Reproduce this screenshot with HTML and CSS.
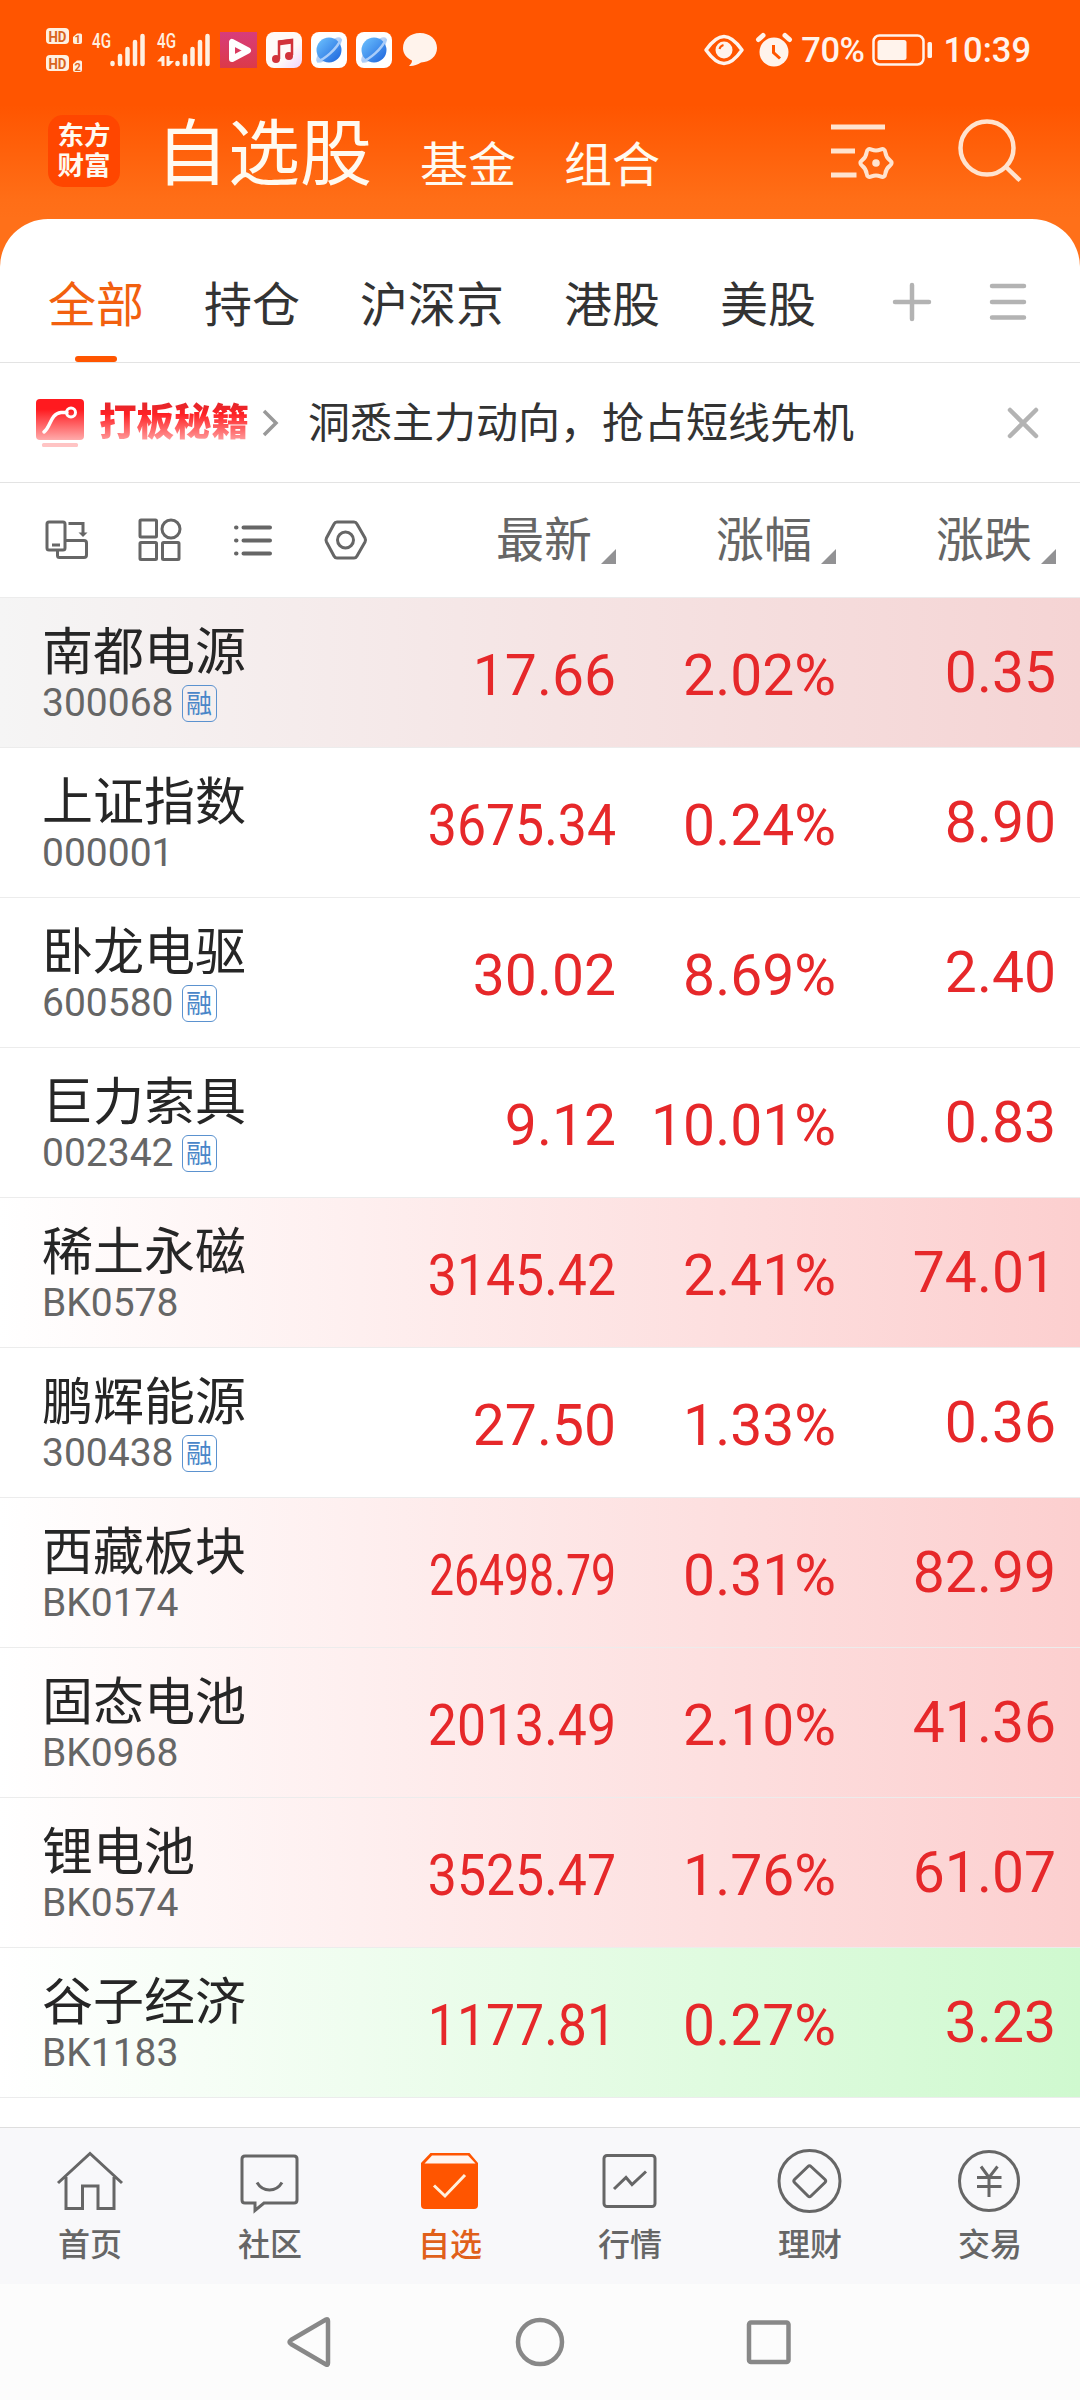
FILE: index.html
```html
<!DOCTYPE html>
<html lang="zh-CN">
<head>
  <meta charset="UTF-8">
  <meta name="viewport" content="width=device-width, initial-scale=1.0">
  <title>自选股</title>
  <link rel="stylesheet" href="styles.css">
</head>
<body>
  <!-- shared icons -->
  <svg class="defs" width="0" height="0">
    <defs>
      <linearGradient id="planet" x1="0" y1="0" x2="1" y2="1">
        <stop offset="0" stop-color="#6fc4ff"/>
        <stop offset="1" stop-color="#1b62dc"/>
      </linearGradient>
      <linearGradient id="play" x1="0" y1="0" x2="0" y2="1">
        <stop offset="0" stop-color="#d83c7c"/>
        <stop offset="1" stop-color="#dc3a48"/>
      </linearGradient>
      <linearGradient id="music" x1="0" y1="0" x2="1" y2="1">
        <stop offset="0.6" stop-color="#fffaf8"/>
        <stop offset="1" stop-color="#f0d4fa"/>
      </linearGradient>
      <linearGradient id="board" x1="0" y1="0" x2="0" y2="1">
        <stop offset="0.25" stop-color="#ff1a1f"/>
        <stop offset="1" stop-color="#ffabab"/>
      </linearGradient>
      <symbol id="browser" viewBox="0 0 36 36">
        <rect width="36" height="36" rx="8" fill="#fff"/>
        <ellipse cx="18" cy="18" rx="17" ry="6" transform="rotate(-45 18 18)" fill="#b9d2f6"/>
        <circle cx="18" cy="18" r="12.5" fill="url(#planet)"/>
        <path d="M6 29.500C13 28 26 17 30 7" fill="none" stroke="#a9cdfa" stroke-width="2.500"/>
      </symbol>
    </defs>
  </svg>

  <div class="top">
    <div class="status">
      <svg class="hd" width="36" height="44" viewBox="0 0 36 44">
        <rect x="0" y="0" width="23" height="16" rx="4"/>
        <path d="M27 9l4-3.500h3.500q1.500 0 1.500 1.500v7q0 2-2 2h-5q-2 0-2-2z"/>
        <rect x="0" y="27" width="23" height="16" rx="4"/>
        <path d="M27 36l4-3.500h3.500q1.500 0 1.500 1.500v8q0 2-2 2h-5q-2 0-2-2z"/>
        <text x="2.500" y="13.500" font-size="15.500" textLength="18" lengthAdjust="spacingAndGlyphs">HD</text>
        <text x="28.500" y="15" font-size="11">1</text>
        <text x="2.500" y="40.500" font-size="15.500" textLength="18" lengthAdjust="spacingAndGlyphs">HD</text>
        <text x="28.500" y="42.500" font-size="11">2</text>
      </svg>
      <svg class="signal" width="54" height="36" viewBox="0 0 54 36">
        <text x="0" y="16" font-size="20.500" textLength="19" lengthAdjust="spacingAndGlyphs">4G</text>
        <path d="M20.500 31v1M28 24v8M35.500 17v15M43 10v22M50.500 4v28"/>
      </svg>
      <svg class="signal second" width="54" height="36" viewBox="0 0 54 36">
        <text x="0" y="16" font-size="20.500" textLength="19" lengthAdjust="spacingAndGlyphs">4G</text>
        <path d="M20.500 31v1M28 24v8M35.500 17v15M43 10v22M50.500 4v28"/>
        <path class="arrows" d="M0 29.500L5 24h2.500v10H4.500v-4.500zM9.500 24h3v5H17L12 34H9.500z"/>
      </svg>
      <svg class="app" width="37" height="36" viewBox="0 0 37 36">
        <rect width="37" height="36" fill="url(#play)"/>
        <path d="M12 10v17l16-8.500z" fill="none" stroke="#fff" stroke-width="6" stroke-linejoin="round"/>
      </svg>
      <svg class="app" width="36" height="36" viewBox="0 0 36 36">
        <rect width="36" height="36" rx="8" fill="url(#music)"/>
        <path d="M13 27V9.500l13-1.500v15" fill="none" stroke="#d2333a" stroke-width="2.500"/>
        <path d="M12.500 8.500L27 7v4.500l-14.500 2z" fill="#d2333a"/>
        <circle cx="10" cy="27" r="4" fill="#d2333a"/>
        <circle cx="23" cy="24" r="4" fill="#d2333a"/>
      </svg>
      <svg class="app" width="36" height="36"><use href="#browser"/></svg>
      <svg class="app" width="36" height="36"><use href="#browser"/></svg>
      <svg class="bubble" width="34" height="34" viewBox="0 0 34 34">
        <path d="M17 0C27 0 34 6.500 34 15S27 29 18 29.500C14 32 10 33.500 6 33c2-2 3-3.500 3-5.500C3.500 25 0 20.500 0 15 0 6.500 7 0 17 0z" fill="#fff3ec"/>
      </svg>

      <div class="status-right">
        <svg width="40" height="32" viewBox="0 0 40 32">
          <path d="M2 16C9 6 14 2.500 20 2.500S31 6 38 16C31 26 26 29.500 20 29.500S9 26 2 16z" fill="none" stroke="#fff3ec" stroke-width="3.500" stroke-linejoin="round"/>
          <circle cx="20" cy="16" r="8.500" fill="#fff3ec"/>
          <path d="M15.500 15c.5-2 2-3.500 4-4" fill="none" stroke="#ff5500" stroke-width="2"/>
        </svg>
        <svg class="alarm" width="36" height="34" viewBox="0 0 36 34">
          <circle cx="18" cy="19" r="14.500" fill="#fff3ec"/>
          <path d="M2.500 6.500L7 2.500M33.500 6.500L29 2.500" stroke="#fff3ec" stroke-width="5" stroke-linecap="round"/>
          <path d="M17.500 12v7.500l6.500 6" fill="none" stroke="#ff5500" stroke-width="3"/>
        </svg>
        <span class="percent">70%</span>
        <svg class="battery" width="60" height="32" viewBox="0 0 60 32">
          <rect x="1.500" y="1.500" width="50" height="29" rx="6" fill="none" stroke="#fff3ec" stroke-width="2.500"/>
          <rect x="5.500" y="6" width="29" height="20" rx="2.500" fill="#fff3ec"/>
          <rect x="55.500" y="8" width="4.500" height="16" rx="1.500" fill="#fff3ec"/>
        </svg>
        <span class="time">10:39</span>
      </div>
    </div>

    <div class="header">
      <div class="logo"><span>东方</span><span>财富</span></div>
      <div class="title">自选股</div>
      <div class="subtitle">基金</div>
      <div class="subtitle">组合</div>
      <svg class="settings" width="64" height="64" viewBox="0 0 64 64">
        <path d="M0 8h54M0 32h24M0 56h25.500" stroke="#ffe3cf" stroke-width="5" fill="none"/>
        <path d="M13.750-2.900Q17.500 0 13.750 2.900 10 5.750 9.400 10.500 8.750 15.200 4.400 13.350 0 11.500-4.400 13.350-8.750 15.200-9.400 10.500-10 5.750-13.750 2.900-17.500 0-13.750-2.900-10-5.750-9.400-10.500-8.750-15.200-4.400-13.350 0-11.500 4.400-13.350 8.750-15.200 9.400-10.500 10-5.750 13.750-2.900z" transform="translate(45 44)" stroke="#ffe3cf" stroke-width="4" fill="none"/>
        <circle cx="45" cy="44" r="3.800" fill="#ffe3cf"/>
      </svg>
      <svg class="search" width="64" height="64" viewBox="0 0 64 64">
        <circle cx="29" cy="29" r="26.500" stroke="#ffe3cf" stroke-width="4.500" fill="none"/>
        <path d="M48 48l14 13.500" stroke="#ffe3cf" stroke-width="4.500"/>
      </svg>
    </div>
  </div>

  <div class="panel">
    <div class="tabs">
      <div class="tab active">全部</div>
      <div class="tab">持仓</div>
      <div class="tab">沪深京</div>
      <div class="tab">港股</div>
      <div class="tab">美股</div>
      <svg class="add" width="40" height="40" viewBox="0 0 40 40">
        <path d="M20 3v34M3 20h34"/>
      </svg>
      <svg class="more" width="40" height="40" viewBox="0 0 40 40">
        <path d="M4 4h32M4 20h32M4 35.500h32"/>
      </svg>
    </div>

    <div class="banner">
      <svg width="48" height="48" viewBox="0 0 48 48">
        <rect width="48" height="41" rx="4" fill="url(#board)"/>
        <path d="M8 33c7-5 6-18 17-19.500h6" fill="none" stroke="#fff" stroke-width="3.500" stroke-linecap="round"/>
        <circle cx="35" cy="13.500" r="4.500" fill="none" stroke="#fff" stroke-width="3"/>
        <rect x="6" y="44" width="36" height="4" rx="1.500" fill="#ffc4c4"/>
      </svg>
      <div class="banner-tag">打板秘籍</div>
      <svg class="chevron" width="16" height="28" viewBox="0 0 16 28">
        <path d="M2 2l12 12L2 26"/>
      </svg>
      <div class="banner-text">洞悉主力动向，抢占短线先机</div>
      <svg class="close" width="30" height="30" viewBox="0 0 30 30">
        <path d="M2 2l26 26M28 2L2 28"/>
      </svg>
    </div>

    <div class="columns">
      <div class="tools">
        <svg width="44" height="44" viewBox="0 0 44 44">
          <rect x="2" y="4" width="18" height="28" rx="2"/>
          <path d="M7 27h8M23.500 5.500H38V16M20 22.500h19q2.500 0 2.500 2.500v12q0 2.500-2.500 2.500H14.500q-2 0-2-2v-5"/>
          <path d="M33.500 14.500h9L38 19z" fill="#666" stroke="none"/>
        </svg>
        <svg width="44" height="44" viewBox="0 0 44 44">
          <rect x="2" y="2" width="16.500" height="17" rx="1"/>
          <circle cx="33" cy="11" r="9"/>
          <rect x="2" y="24.500" width="16.500" height="17" rx="1"/>
          <rect x="24.500" y="24.500" width="16.500" height="17" rx="1"/>
        </svg>
        <svg class="list" width="44" height="44" viewBox="0 0 44 44">
          <path d="M12.500 9.500H39M12.500 22.500H39M12.500 35.500H39M5 9.500h.5M5 22.500h.5M5 35.500h.5"/>
        </svg>
        <svg width="44" height="44" viewBox="0 0 44 44">
          <path d="M13 4h17q2 0 3 2l8 14q1 2 0 4l-8 14q-1 2-3 2H13q-2 0-3-2L2.500 24q-1-2 0-4L10 6q1-2 3-2z"/>
          <circle cx="21.500" cy="22" r="8"/>
        </svg>
      </div>
      <div class="col">最新<i></i></div>
      <div class="col">涨幅<i></i></div>
      <div class="col">涨跌<i></i></div>
    </div>

    <div class="list-rows">
      <div class="row pinned">
        <div class="stock">
          <div class="name">南都电源</div>
          <div class="code">300068<span class="badge">融</span></div>
        </div>
        <div class="price">17.66</div>
        <div class="rate">2.02%</div>
        <div class="change">0.35</div>
      </div>
      <div class="row">
        <div class="stock">
          <div class="name">上证指数</div>
          <div class="code">000001</div>
        </div>
        <div class="price narrow">3675.34</div>
        <div class="rate">0.24%</div>
        <div class="change">8.90</div>
      </div>
      <div class="row">
        <div class="stock">
          <div class="name">卧龙电驱</div>
          <div class="code">600580<span class="badge">融</span></div>
        </div>
        <div class="price">30.02</div>
        <div class="rate">8.69%</div>
        <div class="change">2.40</div>
      </div>
      <div class="row">
        <div class="stock">
          <div class="name">巨力索具</div>
          <div class="code">002342<span class="badge">融</span></div>
        </div>
        <div class="price">9.12</div>
        <div class="rate">10.01%</div>
        <div class="change">0.83</div>
      </div>
      <div class="row up">
        <div class="stock">
          <div class="name">稀土永磁</div>
          <div class="code">BK0578</div>
        </div>
        <div class="price narrow">3145.42</div>
        <div class="rate">2.41%</div>
        <div class="change">74.01</div>
      </div>
      <div class="row">
        <div class="stock">
          <div class="name">鹏辉能源</div>
          <div class="code">300438<span class="badge">融</span></div>
        </div>
        <div class="price">27.50</div>
        <div class="rate">1.33%</div>
        <div class="change">0.36</div>
      </div>
      <div class="row up">
        <div class="stock">
          <div class="name">西藏板块</div>
          <div class="code">BK0174</div>
        </div>
        <div class="price narrower">26498.79</div>
        <div class="rate">0.31%</div>
        <div class="change">82.99</div>
      </div>
      <div class="row up">
        <div class="stock">
          <div class="name">固态电池</div>
          <div class="code">BK0968</div>
        </div>
        <div class="price narrow">2013.49</div>
        <div class="rate">2.10%</div>
        <div class="change">41.36</div>
      </div>
      <div class="row up">
        <div class="stock">
          <div class="name">锂电池</div>
          <div class="code">BK0574</div>
        </div>
        <div class="price narrow">3525.47</div>
        <div class="rate">1.76%</div>
        <div class="change">61.07</div>
      </div>
      <div class="row down">
        <div class="stock">
          <div class="name">谷子经济</div>
          <div class="code">BK1183</div>
        </div>
        <div class="price narrow">1177.81</div>
        <div class="rate">0.27%</div>
        <div class="change">3.23</div>
      </div>
    </div>
  </div>

  <div class="nav">
    <div class="nav-item">
      <svg width="68" height="68" viewBox="0 0 68 68">
        <path d="M2 36L34 6.500 66 36M10 30v31.500h16.500V39H42v22.500h16V30"/>
      </svg>
      <span>首页</span>
    </div>
    <div class="nav-item">
      <svg width="68" height="68" viewBox="0 0 68 68">
        <path d="M9 9h49q3 0 3 3v41q0 3-3 3H28l-9 7.500V56H9q-3 0-3-3V12q0-3 3-3z"/>
        <path d="M21 35.500q4.500 7.500 12.500 7.500T46 35.500"/>
      </svg>
      <span>社区</span>
    </div>
    <div class="nav-item active">
      <svg width="68" height="68" viewBox="0 0 68 68">
        <path class="box" d="M5 16L14.500 6h39L62 16v42q0 4-4 4H9q-4 0-4-4z"/>
        <path class="lid" d="M16 8.500h36l7.500 8H8.500z"/>
        <path class="check" d="M18 38.500L29 49l20-21"/>
      </svg>
      <span>自选</span>
    </div>
    <div class="nav-item">
      <svg width="68" height="68" viewBox="0 0 68 68">
        <rect x="8" y="8.500" width="51" height="51" rx="3"/>
        <path d="M18 42l12-11.500 6 7L50 24.500"/>
      </svg>
      <span>行情</span>
    </div>
    <div class="nav-item">
      <svg width="68" height="68" viewBox="0 0 68 68">
        <circle cx="33.500" cy="34" r="30.500"/>
        <path d="M32 19.500q1.500-1.500 3 0L49 32.500q1.500 1.500 0 3L35 49q-1.500 1.500-3 0L18.500 35.500q-1.500-1.500 0-3z"/>
      </svg>
      <span>理财</span>
    </div>
    <div class="nav-item">
      <svg width="68" height="68" viewBox="0 0 68 68">
        <circle cx="33" cy="34" r="29.500"/>
        <path d="M25 19.500l8 11 8.500-11M33 30v20M21 30.500h24.500M21 39.500h24.500"/>
      </svg>
      <span>交易</span>
    </div>
  </div>

  <div class="system">
    <svg width="52" height="52" viewBox="0 0 52 52">
      <path d="M42 3.500q2-1 2 1.500v42q0 2.500-2 1.500L7 28q-3-2 0-4z"/>
    </svg>
    <svg width="52" height="52" viewBox="0 0 52 52">
      <circle cx="26" cy="26" r="22"/>
    </svg>
    <svg width="52" height="52" viewBox="0 0 52 52">
      <rect x="5" y="6.500" width="39.500" height="39.500" rx="2"/>
    </svg>
  </div>
</body>
</html>
```

FILE: styles.css
```css
* {
  box-sizing: border-box;
}

body {
  margin: 0;
  width: 1080px;
  height: 2400px;
  overflow: hidden;
  display: flex;
  flex-direction: column;
  background: #ff7019;
  font-family: 'Noto Sans CJK SC', sans-serif;
  color: #333;
}

svg {
  flex: none;
  overflow: visible;
}

.defs {
  position: absolute;
}

.top {
  height: 219px;
  background: linear-gradient(#ff5500 0, #ff5500 105px, #ff6e17 200px, #ff7019 219px);
}

/* status bar */
.status {
  height: 100px;
  display: flex;
  align-items: center;
  padding: 0 49px 0 46px;
  color: #fff3ec;
  font-family: Roboto, sans-serif;
  font-size: 34.5px;
  font-weight: 500;
}

.hd {
  margin-right: 10px;
  fill: #fff0e0;
}

.hd text {
  fill: #d9641e;
  font-weight: 700;
}

.signal {
  margin-right: 10px;
  fill: #fff0e0;
}

.second {
  margin-left: 1px;
  margin-right: 9px;
}

.signal path {
  stroke: #fff0e0;
  stroke-width: 4.5;
  stroke-linecap: round;
}

.signal .arrows {
  stroke: none;
}

.app {
  margin-right: 9px;
}

.bubble {
  margin-left: 2px;
}

.status-right {
  margin-left: auto;
  display: flex;
  align-items: center;
}

.alarm {
  margin: 0 9px 0 12px;
}

.percent {
  letter-spacing: -0.5px;
}

.battery {
  margin: 0 11px 0 8px;
}

/* header */
.header {
  height: 119px;
  display: flex;
  align-items: flex-start;
  padding-left: 48px;
  color: #fffaf0;
}

.logo {
  width: 72px;
  height: 72px;
  margin: 15px 36px 0 0;
  padding-top: 4px;
  border-radius: 15px;
  background: #ff4600;
  display: flex;
  flex-direction: column;
  align-items: center;
  font-size: 26.5px;
  font-weight: 700;
  line-height: 30px;
}

.title {
  font-size: 72px;
  line-height: 96px;
  width: 216px;
  margin-right: 48px;
}

.subtitle {
  font-size: 48px;
  line-height: 60px;
  margin: 31px 48px 0 0;
}

.settings {
  margin: 19px 0 0 123px;
}

.search {
  margin: 19px 0 0 63px;
}

/* white card */
.panel {
  height: 1908px;
  background: #fff;
  border-radius: 48px 48px 0 0;
}

.tabs {
  height: 144px;
  display: flex;
  align-items: center;
  gap: 60px;
  padding: 21px 0 0 48px;
  border-bottom: 1px solid #e3e3e3;
}

.tab {
  height: 122px;
  line-height: 122px;
  font-size: 48px;
}

.tab.active {
  color: #f2600f;
  display: flex;
  flex-direction: column;
  align-items: center;
}

.tab.active::after {
  content: '';
  width: 42px;
  height: 6px;
  margin-top: -6px;
  border-radius: 3px;
  background: #ff5500;
  flex: none;
}

.add,
.more,
.close {
  fill: none;
  stroke: #b3b3b3;
  stroke-width: 4.5;
  stroke-linecap: round;
}

.add {
  margin: 1px 0 0 16px;
}

.more {
  margin: 1px 0 0 -4px;
}

.banner {
  height: 120px;
  display: flex;
  align-items: center;
  padding-left: 36px;
  border-bottom: 1px solid #e3e3e3;
}

.banner-tag {
  margin: -7px 13px 0 15px;
  width: 150px;
  font-size: 37.5px;
  font-weight: 900;
  line-height: 50px;
  background: linear-gradient(#e8262a 12px, #ff2024 20px, #ff9a9a 46px);
  -webkit-background-clip: text;
  background-clip: text;
  color: transparent;
}

.chevron {
  margin-right: 30px;
  fill: none;
  stroke: #999;
  stroke-width: 3.5;
}

.banner-text {
  width: 546px;
  margin-top: -6px;
  font-size: 42px;
  white-space: nowrap;
}

.close {
  margin: 1px 0 0 154px;
}

.columns {
  height: 115px;
  display: flex;
  align-items: center;
  border-bottom: 1px solid #ececec;
}

.tools {
  width: 396px;
  padding-left: 45px;
  display: flex;
  gap: 49px;
  fill: none;
  stroke: #666;
  stroke-width: 3;
}

.tools .list {
  stroke-width: 4;
  stroke-linecap: round;
}

.col {
  width: 220px;
  display: flex;
  justify-content: flex-end;
  font-size: 48px;
  line-height: 56px;
  padding-bottom: 8px;
  color: #666;
}

.col i {
  width: 15px;
  height: 15px;
  margin: 41px 0 0 9px;
  background: #929294;
  clip-path: polygon(100% 0, 100% 100%, 0 100%);
}

/* stock list */
.row {
  height: 150px;
  display: flex;
  align-items: center;
  border-bottom: 1px solid #ececec;
  font-family: Roboto, sans-serif;
  font-size: 57px;
  color: #e6282a;
}

.pinned { background: linear-gradient(90deg, #f5f5f5, #f5d4d4); }
.up { background: linear-gradient(90deg, #fff, #fccfcf); }
.down { background: linear-gradient(90deg, #fff, #cff9cf); }

.stock {
  width: 336px;
  padding-left: 42px;
}

.name {
  margin: 1px 0 4px;
  font-family: 'Noto Sans CJK SC', sans-serif;
  font-size: 51px;
  line-height: 56px;
  color: #262626;
}

.code {
  height: 46px;
  display: flex;
  align-items: center;
  font-size: 39px;
  color: #666;
}

.badge {
  width: 35px;
  height: 37px;
  margin-left: 8px;
  border: 1.5px solid #5b92cf;
  border-radius: 6px;
  font-family: 'Noto Sans CJK SC', sans-serif;
  font-size: 26px;
  line-height: 32px;
  text-align: center;
  color: #4a86c8;
}

.price {
  width: 280px;
  padding-top: 6px;
  text-align: right;
  transform-origin: right;
}

.narrow { transform: scaleX(0.908); }
.narrower { transform: scaleX(0.782); }

.rate,
.change {
  flex: none;
  width: 220px;
  text-align: right;
}

.rate {
  padding-top: 6px;
}

/* bottom navigation */
.nav {
  height: 157px;
  display: flex;
  border-top: 1px solid #dedede;
  background: #f8f8fa;
}

.nav-item {
  flex: 1;
  padding-top: 19px;
  display: flex;
  flex-direction: column;
  align-items: center;
  font-size: 32px;
  line-height: 44px;
  font-weight: 500;
  color: #666;
}

.nav-item span {
  margin-top: 5px;
}

.nav-item svg {
  fill: none;
  stroke: #666;
  stroke-width: 3;
}

.nav-item.active {
  color: #e0601a;
}

.nav-item .box {
  fill: #ff5500;
  stroke: none;
}

.nav-item .lid {
  fill: #fff5ef;
  stroke: none;
}

.nav-item .check {
  stroke: #fff0dc;
}

/* android keys */
.system {
  height: 116px;
  display: flex;
  justify-content: center;
  align-items: center;
  gap: 178px;
  background: #fcfcfc;
}

.system svg {
  fill: none;
  stroke: #888;
  stroke-width: 4.5;
}
```
